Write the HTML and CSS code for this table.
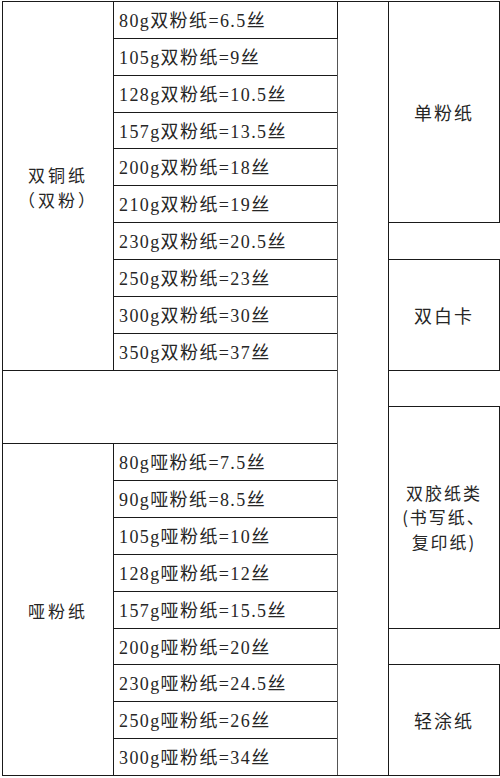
FILE: index.html
```html
<!DOCTYPE html>
<html lang="zh-CN">
<head>
<meta charset="utf-8">
<title>纸张克重与丝数对照表</title>
<link rel="stylesheet" href="styles.css">
</head>
<body>
<table class="sheet">
  <colgroup>
    <col class="c-kind">
    <col class="c-spec">
    <col class="c-blank">
    <col class="c-type">
  </colgroup>
  <tbody>
    <tr>
      <td class="kind" rowspan="10">双铜纸<br>（双粉）</td>
      <td class="spec">80g双粉纸=6.5丝</td>
      <td class="blank" rowspan="21"></td>
      <td class="type" rowspan="6">单粉纸</td>
    </tr>
    <tr><td class="spec">105g双粉纸=9丝</td></tr>
    <tr><td class="spec">128g双粉纸=10.5丝</td></tr>
    <tr><td class="spec">157g双粉纸=13.5丝</td></tr>
    <tr><td class="spec">200g双粉纸=18丝</td></tr>
    <tr><td class="spec">210g双粉纸=19丝</td></tr>
    <tr><td class="spec">230g双粉纸=20.5丝</td><td class="gap"></td></tr>
    <tr><td class="spec">250g双粉纸=23丝</td><td class="type" rowspan="3">双白卡</td></tr>
    <tr><td class="spec">300g双粉纸=30丝</td></tr>
    <tr><td class="spec">350g双粉纸=37丝</td></tr>
    <tr><td class="empty" colspan="2" rowspan="2"></td><td class="gap"></td></tr>
    <tr><td class="type multi" rowspan="6">双胶纸类<br>(书写纸、<br>复印纸)</td></tr>
    <tr><td class="kind" rowspan="9">哑粉纸</td><td class="spec">80g哑粉纸=7.5丝</td></tr>
    <tr><td class="spec">90g哑粉纸=8.5丝</td></tr>
    <tr><td class="spec">105g哑粉纸=10丝</td></tr>
    <tr><td class="spec">128g哑粉纸=12丝</td></tr>
    <tr><td class="spec">157g哑粉纸=15.5丝</td></tr>
    <tr><td class="spec">200g哑粉纸=20丝</td><td class="gap"></td></tr>
    <tr><td class="spec">230g哑粉纸=24.5丝</td><td class="type" rowspan="3">轻涂纸</td></tr>
    <tr><td class="spec">250g哑粉纸=26丝</td></tr>
    <tr><td class="spec">300g哑粉纸=34丝</td></tr>
  </tbody>
</table>
</body>
</html>
```

FILE: styles.css
```css
html, body {
  margin: 0;
  padding: 0;
  background: #fff;
}

body {
  padding: 1px 0 0 2px;
}

.sheet {
  border-collapse: collapse;
  table-layout: fixed;
  width: 497px;
  color: #262626;
  font-family: "Liberation Serif", "Noto Sans CJK SC", serif;
}

.c-kind { width: 111px; }
.c-spec { width: 224px; }
.c-blank { width: 51px; }
.c-type { width: 111px; }

.sheet tr {
  height: 36.86px;
}

.sheet td {
  border: 1px solid #1a1a1a;
  padding: 0;
  vertical-align: middle;
}

.spec {
  font-size: 18px;
  letter-spacing: 1.4px;
  padding: 2px 0 0 5px !important;
  white-space: nowrap;
  line-height: 20px;
}

.kind,
.type {
  text-align: center;
  font-family: "Noto Sans CJK SC", sans-serif;
  font-size: 18px;
  letter-spacing: 2px;
  line-height: 24px;
}

.kind {
  font-size: 17px;
  letter-spacing: 3px;
  line-height: 24.6px;
  padding-top: 4px !important;
}

.type.multi {
  font-size: 17px;
  line-height: 24.6px;
  letter-spacing: 2px;
}

.sheet td.gap {
  border-right: none;
}

.sheet td.blank {
  border-left-color: #555;
}
```
